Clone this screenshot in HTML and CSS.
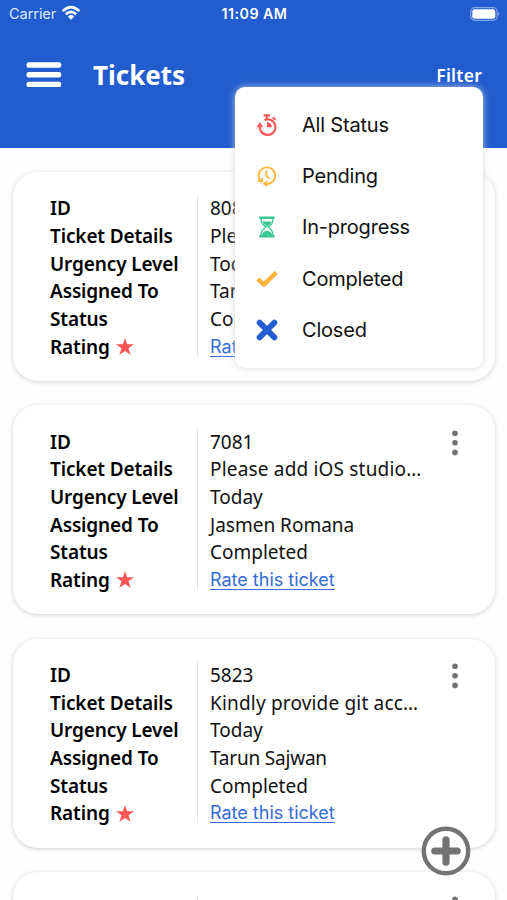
FILE: index.html
```html
<!DOCTYPE html>
<html lang="en">
<head>
<meta charset="utf-8">
<title>Tickets</title>
<link rel="stylesheet" href="styles.css">
</head>
<body>
<svg class="defs" width="0" height="0">
  <symbol id="star" viewBox="0 0 18 17"><path fill="#fa5555" d="M9 0l2.1 6.3H18l-5.5 4 2.1 6.5L9 12.9l-5.6 3.9 2.1-6.5L0 6.3h6.9z"/></symbol>
  <symbol id="dots" viewBox="0 0 6 26"><g fill="#727272"><circle cx="3" cy="3.2" r="2.8"/><circle cx="3" cy="12.8" r="2.8"/><circle cx="3" cy="22.4" r="2.8"/></g></symbol>
</svg>
<header class="header">
  <div class="statusbar">
    <div class="carrier"><span>Carrier</span>
      <svg width="20" height="16" viewBox="0 0 20 16" fill="none" stroke="#fff" stroke-width="2.6"><path d="M1.7 6.1Q10-1.9 18.3 6.1M4.8 9.2Q10 4.4 15.2 9.2"/><path fill="#fff" stroke="none" d="M6.8 11.4Q10 8.6 13.2 11.4L10 14.7z"/></svg>
    </div>
    <span class="time">11:09 AM</span>
    <svg class="battery" width="31" height="14" viewBox="0 0 31 14"><rect x=".7" y=".7" width="26.4" height="12.6" rx="3.8" fill="none" stroke="#fff" stroke-opacity=".45" stroke-width="1.2"/><rect x="2.3" y="2.3" width="23" height="9.4" rx="2.2" fill="#fff"/><path d="M28.4 4.8q2 2.2 0 4.4z" fill="#fff" opacity=".5"/></svg>
  </div>
  <div class="toolbar">
    <svg class="burger" width="36" height="26" viewBox="0 0 36 26" fill="#fff"><rect x=".5" y=".3" width="34.7" height="5.4" rx="2.2"/><rect x=".5" y="10" width="34.7" height="5.4" rx="2.2"/><rect x=".5" y="19.7" width="34.7" height="5.4" rx="2.2"/></svg>
    <h1 class="title">Tickets</h1>
    <span class="filter">Filter</span>
  </div>
</header>
<main class="list">
  <article class="card">
    <div class="labels"><span>ID</span><span>Ticket Details</span><span>Urgency Level</span><span>Assigned To</span><span>Status</span><span class="rating">Rating <svg width="18" height="17"><use href="#star"/></svg></span></div>
    <div class="values"><span>808</span><span>Plea</span><span>Tod</span><span>Taru</span><span>Com</span><a>Rate</a></div>
  </article>
  <article class="card">
    <div class="labels"><span>ID</span><span>Ticket Details</span><span>Urgency Level</span><span>Assigned To</span><span>Status</span><span class="rating">Rating <svg width="18" height="17"><use href="#star"/></svg></span></div>
    <div class="values"><span>7081</span><span class="details">Please add iOS studio…</span><span>Today</span><span>Jasmen Romana</span><span>Completed</span><a>Rate this ticket</a></div>
    <svg class="more" width="6" height="26"><use href="#dots"/></svg>
  </article>
  <article class="card">
    <div class="labels"><span>ID</span><span>Ticket Details</span><span>Urgency Level</span><span>Assigned To</span><span>Status</span><span class="rating">Rating <svg width="18" height="17"><use href="#star"/></svg></span></div>
    <div class="values"><span>5823</span><span class="details">Kindly provide git acc…</span><span>Today</span><span class="tight">Tarun Sajwan</span><span>Completed</span><a>Rate this ticket</a></div>
    <svg class="more" width="6" height="26"><use href="#dots"/></svg>
  </article>
  <article class="card">
    <div class="labels"></div>
    <div class="values"></div>
    <svg class="more" width="6" height="26"><use href="#dots"/></svg>
  </article>
</main>
<nav class="menu">
  <div class="item"><svg width="22" height="22" viewBox="0 0 22 22"><g fill="none" stroke="#f95858" stroke-width="2.1"><path d="M4 11.5A7.8 7.8 0 1 0 8.4 6Q9.8 5.3 11.3 5.3A7.8 7.8 0 0 1 17.4 8"/><path d="M7.6 1.4h6.4M10.8 1.4v4M16.6 3.4l3 2.4"/></g><path fill="#f95858" d="M11 8.2v5h5A5 5 0 0 0 11 8.2zM.6 13.2l3.3-5.2 3.3 5.2z"/></svg><span>All Status</span></div>
  <div class="item"><svg width="22" height="22" viewBox="0 0 22 22"><g fill="none" stroke="#fbb940" stroke-width="1.9"><path d="M6 17.4A8.3 8.3 0 1 1 15 17.9Q13 19 10 19"/><path d="M1.8 16h4.4v-3"/><path d="M10.3 5.5v5.2l3.4 2.8"/></g><path fill="#fbb940" d="M11.3 15.6v6.4l-5-3.2z"/></svg><span>Pending</span></div>
  <div class="item"><svg width="22" height="22" viewBox="0 0 22 22"><g fill="none" stroke="#3cc893" stroke-width="1.3"><path d="M5 2.5c0 5 2 6.5 4.8 8.5C7 13 5 15 5 19.5M17 2.5c0 5-2 6.5-4.8 8.5C15 13 17 15 17 19.5"/></g><path fill="#3cc893" d="M3.3.5h15.4v2.6H3.3zM3.3 19h15.4v2.5H3.3zM6.4 5.5h9.2Q14.5 8.5 11 11 7.5 8.5 6.4 5.5zM5.7 19.2Q6.5 15.5 11 14.8q4.5.7 5.3 4.4z"/></svg><span>In-progress</span></div>
  <div class="item"><svg width="22" height="22" viewBox="0 0 22 22"><path fill="none" stroke="#fdb238" stroke-width="4.4" stroke-linejoin="round" d="M1.8 11l6 5.6L20.2 4.6"/></svg><span>Completed</span></div>
  <div class="item"><svg width="22" height="22" viewBox="0 0 22 22"><path fill="none" stroke="#235dd1" stroke-width="5.8" stroke-linecap="round" d="M3.6 3.6l14.8 14.8M18.4 3.6L3.6 18.4"/></svg><span>Closed</span></div>
</nav>
<svg class="add" width="50" height="50" viewBox="0 0 50 50"><circle cx="25" cy="25" r="22.2" fill="#fff" stroke="#737373" stroke-width="4.4"/><path d="M25 13.8v22.4M13.8 25h22.4" stroke="#737373" stroke-width="7.2" stroke-linecap="round"/></svg>
</body>
</html>
```
FILE: styles.css
```css
* { box-sizing: border-box; }
body {
  margin: 0;
  height: 900px;
  overflow: hidden;
  position: relative;
  background: #fefefe;
  color: #111;
  font-family: "Noto Sans", sans-serif;
}
.defs { position: absolute; }
.header { height: 147.5px; background: #215dce; color: #fff; }
.statusbar {
  height: 28px;
  padding: 0 7px 0 9px;
  display: grid;
  grid-template-columns: 1fr auto 1fr;
  align-items: center;
  font: 14.6px/28px Inter, sans-serif;
}
.carrier { display: flex; align-items: center; gap: 5px; color: #dce7fb; letter-spacing: -.1px; }
.carrier svg { margin-top: -2px; }
.time { font-weight: 600; font-size: 14.2px; letter-spacing: .5px; }
.battery { justify-self: end; margin-right: -1px; margin-top: -1px; }
.toolbar { height: 94px; padding: 0 25px 0 26px; display: flex; align-items: center; }
.title { margin: 0 0 0 31px; font-size: 26px; line-height: 40px; font-weight: 700; }
.filter { margin: -1px 0 0 auto; font-size: 17.5px; font-weight: 600; letter-spacing: .25px; }
.list { height: 752.5px; overflow: hidden; display: flex; flex-direction: column; gap: 24.3px; padding: 24.5px 12px 0 13px; }
.card {
  flex: none;
  height: 209px;
  padding: 23.3px 37px 20px;
  display: flex;
  background: #fff;
  border-radius: 25px;
  box-shadow: 0 1px 5px rgba(0, 0, 0, .18);
}
.labels, .values { flex: none; display: flex; flex-direction: column; height: 165px; font-size: 19px; line-height: 27.7px; white-space: nowrap; }
.labels { width: 147px; font-weight: 600; color: #000; letter-spacing: -.13px; }
.values { width: 233px; padding-left: 13px; position: relative; }
.values::before { content: ""; position: absolute; left: 0; top: .5px; width: 1px; height: 161px; background: #e5e5e5; }
.values a { font: 18px/26px Inter, sans-serif; color: #346bd5; text-decoration: underline; text-underline-offset: 3px; text-decoration-thickness: 1.3px; }
.labels span, .values span, .values a { align-self: flex-start; }
.values .details { letter-spacing: .18px; }
.values .tight { letter-spacing: -.2px; }
.rating { display: flex; align-items: center; gap: 6.5px; }
.rating svg { margin-top: -2px; }
.more { flex: none; margin: 1px 0 0 21.5px; }
.menu {
  position: absolute;
  left: 235px;
  top: 86.5px;
  width: 248px;
  height: 281px;
  padding: 12.7px 21px;
  background: #fff;
  border-radius: 10px;
  box-shadow: 0 0 7px rgba(205, 210, 220, .85);
}
.item { height: 51.3px; display: flex; align-items: center; gap: 24px; font: 20px/30px Inter, sans-serif; letter-spacing: -.2px; }
.add { position: absolute; left: 420.8px; top: 826px; }
```
